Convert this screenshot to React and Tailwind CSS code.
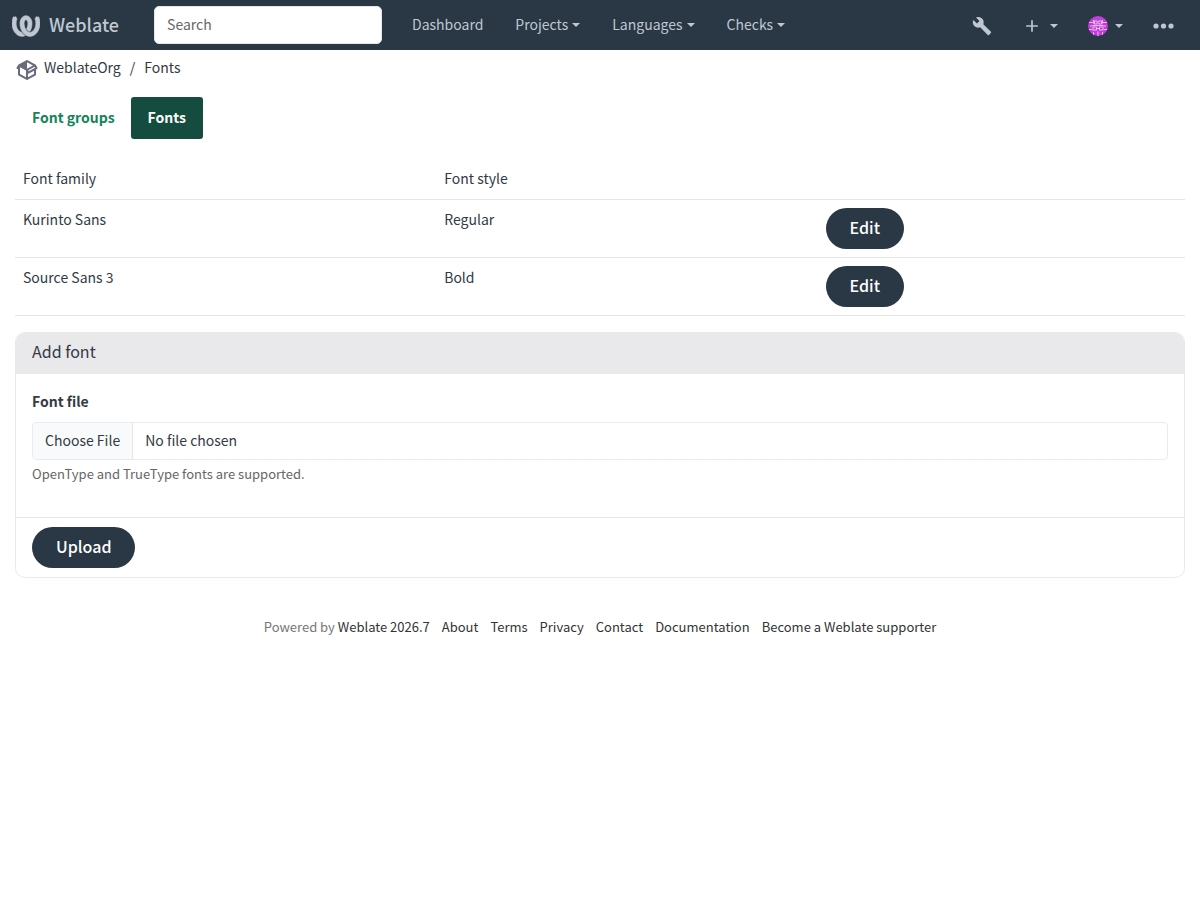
import { MdAdd, MdBuild } from "react-icons/md";
import { SiWeblate } from "react-icons/si";

const menus = [
  { label: "Dashboard", dropdown: false },
  { label: "Projects", dropdown: true },
  { label: "Languages", dropdown: true },
  { label: "Checks", dropdown: true },
];

const fonts = [
  { family: "Kurinto Sans", style: "Regular" },
  { family: "Source Sans 3", style: "Bold" },
];

const footerLinks = [
  "About",
  "Terms",
  "Privacy",
  "Contact",
  "Documentation",
  "Become a Weblate supporter",
];

const Caret = () => (
  <svg viewBox="0 0 8 4" className="w-2 h-1 fill-current shrink-0">
    <path d="M0 0h8L4 4z" />
  </svg>
);

const ProjectIcon = () => (
  <svg viewBox="0 0 24 24" className="size-6 fill-[#6b6b7b] shrink-0">
    <path d="M2,10.96C1.5,10.68 1.35,10.07 1.63,9.59L3.13,7C3.24,6.8 3.41,6.66 3.6,6.58L11.43,2.18C11.59,2.06 11.79,2 12,2C12.21,2 12.41,2.06 12.57,2.18L20.47,6.62C20.66,6.72 20.82,6.88 20.91,7.08L22.36,9.6C22.64,10.08 22.47,10.69 22,10.96L21,11.54V16.5C21,16.88 20.79,17.21 20.47,17.38L12.57,21.82C12.41,21.94 12.21,22 12,22C11.79,22 11.59,21.94 11.43,21.82L3.53,17.38C3.21,17.21 3,16.88 3,16.5V10.96C2.7,11.13 2.32,11.14 2,10.96M12,4.15V10.85L17.96,7.5L12,4.15M5,15.91L11,19.29V12.58L5,9.21V15.91M19,15.91V12.69L14,15.59C13.67,15.77 13.3,15.76 13,15.6V19.29L19,15.91M13.85,13.36L20.13,9.73L19.55,8.72L13.27,12.35L13.85,13.36Z" />
  </svg>
);

const Avatar = () => (
  <svg viewBox="0 0 20 20" className="size-5 rounded-full shrink-0">
    <rect width="20" height="20" fill="#c13fd6" />
    <g stroke="#f3d3f8" strokeWidth="0.8" fill="none">
      <path d="M1 6.5h4M15 6.5h4M2 10h2.5M15.5 10H18M1 13.5h3M16 13.5h3M5.5 4v3.5M14.5 4v3.5" />
      <rect x="6.5" y="5" width="2.6" height="3" />
      <rect x="10.9" y="5" width="2.6" height="3" />
      <rect x="5" y="11" width="3.4" height="3" />
      <rect x="11.6" y="11" width="3.4" height="3" />
      <path d="M4.5 9.5h11M8.4 12.5h3.2M5.5 16v4M10 15.5V20M14.5 16v4" />
    </g>
  </svg>
);

const Navbar = () => (
  <nav className="flex items-center h-[50px] bg-[#2a3744] text-[#bfc8d2] px-3">
    <a href="#" className="flex items-center gap-[9px] mr-[35px]">
      <span className="pt-0.5">
        <SiWeblate className="size-7 stroke-current stroke-[0.5]" />
      </span>
      <span className="text-lg leading-6 font-medium pb-0.5">Weblate</span>
    </a>
    <input
      type="search"
      aria-label="Search"
      placeholder="Search"
      className="w-[228px] h-[38px] rounded-[5px] bg-white px-3 pb-0.5 border border-gray-200 text-[#2a3744] placeholder:text-[#666]"
    />
    <ul className="flex items-center ml-[14px]">
      {menus.map((menu) => (
        <li key={menu.label}>
          <a href="#" className="flex items-center gap-1 px-4">
            <span className="pb-0.5">{menu.label}</span>
            {menu.dropdown && <Caret />}
          </a>
        </li>
      ))}
    </ul>
    <div className="flex items-center gap-[30px] ml-auto mr-[14px] pt-0.5">
      <a href="#" aria-label="Manage">
        <MdBuild className="size-5" />
      </a>
      <button aria-label="Add" className="flex items-center gap-2 cursor-pointer">
        <MdAdd className="size-5" />
        <Caret />
      </button>
      <button aria-label="User profile" className="flex items-center gap-[7px] cursor-pointer">
        <Avatar />
        <Caret />
      </button>
      <button aria-label="More" className="cursor-pointer">
        <svg viewBox="0 0 21 6" className="w-[21px] h-[6px] fill-current">
          <circle cx="3" cy="3" r="2.6" />
          <circle cx="10.5" cy="3" r="2.6" />
          <circle cx="18" cy="3" r="2.6" />
        </svg>
      </button>
    </div>
  </nav>
);

const App = () => {
  return (
    <div className="min-h-screen bg-white font-['Noto_Sans_CJK_SC',sans-serif] text-[14px] leading-[22px] text-[#333a44]">
      <Navbar />

      <main className="px-[15px]">
        {/* Breadcrumb */}
        <div className="flex items-start pt-1.5">
          <span className="pt-0.5">
            <ProjectIcon />
          </span>
          <a href="#" className="ml-[5px]">WeblateOrg</a>
          <span className="mx-[9px]">/</span>
          <a href="#">Fonts</a>
        </div>

        {/* Tabs */}
        <div className="flex mt-[15px] font-bold">
          <button className="h-[42px] pl-[17px] pr-4 pb-0.5 text-[#14845a] cursor-pointer">
            Font groups
          </button>
          <button className="h-[42px] px-[17px] pb-0.5 rounded-[3px] bg-[#144d3f] text-white cursor-pointer">
            Fonts
          </button>
        </div>

        {/* Fonts list */}
        <table className="w-full mt-5 table-fixed text-left">
          <thead>
            <tr className="border-b border-[#e4e5e7]">
              <th className="w-[36%] px-2 pt-2 pb-[10px] font-normal">Font family</th>
              <th className="w-[32.6%] px-2 pt-2 pb-[10px] font-normal">Font style</th>
              <th className="p-2"></th>
            </tr>
          </thead>
          <tbody>
            {fonts.map((font) => (
              <tr key={font.family} className="border-b border-[#e4e5e7] align-top">
                <td className="p-2">{font.family}</td>
                <td className="p-2">{font.style}</td>
                <td className="p-2">
                  <a
                    href="#"
                    className="block w-fit px-6 pt-[7px] pb-[9px] rounded-full bg-[#2a3744] text-white text-base leading-[25px] font-medium"
                  >
                    Edit
                  </a>
                </td>
              </tr>
            ))}
          </tbody>
        </table>

        {/* Add font */}
        <form className="mt-4 rounded-[10px] border border-[#e9e9eb] overflow-hidden">
          <h2 className="px-4 pt-[7px] pb-3 bg-[#e9e9eb] text-base leading-[22px]">
            Add font
          </h2>
          <div className="px-4 pt-4 pb-8">
            <label htmlFor="font-file" className="block mb-[10px] font-bold">
              Font file
            </label>
            <input
              id="font-file"
              type="file"
              className="block w-full h-[38px] rounded-[4px] border border-[#e9ebee] leading-[22px] file:h-9 file:px-3 file:pb-0.5 file:mr-3 file:bg-[#f8fafc] file:border-r file:border-[#e4e7ea] file:text-[#333a44]"
            />
            <p className="mt-[3px] text-[13px] leading-[22px] text-[#666]">
              OpenType and TrueType fonts are supported.
            </p>
          </div>
          <div className="px-4 py-[9px] border-t border-[#e4e5e7]">
            <button
              type="button"
              className="px-6 pt-[7px] pb-[9px] rounded-full bg-[#2a3744] text-white text-base leading-[25px] font-medium cursor-pointer"
            >
              Upload
            </button>
          </div>
        </form>
      </main>

      <footer className="flex flex-wrap justify-center gap-x-3 mt-[38px] text-[13px] leading-[22px]">
        <span className="text-[#777]">
          Powered by{" "}
          <a href="#" className="text-[#333]">
            Weblate 2026.7
          </a>
        </span>
        {footerLinks.map((link) => (
          <a key={link} href="#" className="text-[#333]">
            {link}
          </a>
        ))}
      </footer>
    </div>
  );
};

export default App;
